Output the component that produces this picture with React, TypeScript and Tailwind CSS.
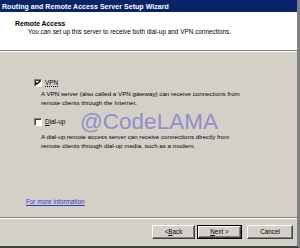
import React from "react";

function Check({ checked }: { checked?: boolean }) {
  return (
    <div className="w-[8px] h-[8px] bg-white border-t border-l border-t-[#808080] border-l-[#808080] border-b border-r border-b-white border-r-white shadow-[inset_1px_1px_0_#404040] flex items-center justify-center shrink-0">
      {checked && (
        <svg width="6" height="6" viewBox="0 0 6 6">
          <path d="M0.5 2.5 L2 4 L5.5 0.8" stroke="#000" strokeWidth="1.3" fill="none" />
        </svg>
      )}
    </div>
  );
}

function Btn({ children, def }: { children: React.ReactNode; def?: boolean }) {
  return (
    <div className={"h-[14px] flex " + (def ? "border border-black" : "")}>
      <div
        className={
          "flex-1 flex items-center justify-center bg-[#d4d0c8] border-t border-l border-t-white border-l-white border-b border-r border-b-[#404040] border-r-[#404040] shadow-[inset_-1px_-1px_0_#808080] text-[6.3px] text-black"
        }
      >
        {children}
      </div>
    </div>
  );
}

export default function App() {
  return (
    <div
      className="w-[300px] h-[248px] flex flex-col bg-[#d4d0c8] border-r-[3px] border-r-[#808080] border-b-2 border-b-[#404040] relative overflow-hidden"
      style={{ fontFamily: '"Liberation Sans", Arial, sans-serif' }}
    >
      {/* title bar */}
      <div className="h-[12px] bg-[#0a246a] flex items-center pl-[2px] shrink-0">
        <span className="text-white font-bold text-[7px] leading-none tracking-[0.05px]">
          Routing and Remote Access Server Setup Wizard
        </span>
      </div>
      {/* header */}
      <div className="h-[38px] bg-white flex flex-col pl-[15px] pt-[8px] shrink-0">
        <div className="font-bold text-[6.8px] leading-[8px] text-black">Remote Access</div>
        <div className="pl-[13px] text-[6.4px] leading-[8px] text-black">
          You can set up this server to receive both dial-up and VPN connections.
        </div>
      </div>
      <div className="h-px bg-[#808080] shrink-0" />
      <div className="h-px bg-white shrink-0" />
      {/* body */}
      <div className="flex-1 flex flex-col pl-[34px] pt-[27px]">
        <div className="flex items-center gap-[2px]">
          <Check checked />
          <span className="text-[6.4px] leading-[8px] text-black underline decoration-dotted px-[1px]">VPN</span>
        </div>
        <div className="pl-[7px] pt-[3px] text-[6.2px] leading-[8.5px] text-black">
          <div>A VPN server (also called a VPN gateway) can receive connections from</div>
          <div>remote clients through the Internet.</div>
        </div>
        <div className="flex items-center gap-[2px] mt-[11px]">
          <Check />
          <span className="text-[6.4px] leading-[8px] text-black px-[1px]">
            <span className="underline">D</span>ial-up
          </span>
        </div>
        <div className="pl-[7px] pt-[7px] text-[6.2px] leading-[8.5px] text-black">
          <div>A dial-up remote access server can receive connections directly from</div>
          <div>remote clients through dial-up media, such as a modem.</div>
        </div>
        <div className="flex-1" />
        <div className="-ml-[8px] mb-[11px] text-[6.3px] leading-[8px] text-[#3333cc] underline">
          For more information
        </div>
      </div>
      <div className="h-px bg-[#808080] shrink-0" />
      <div className="h-px bg-white shrink-0" />
      {/* buttons */}
      <div className="h-[27px] flex items-start pt-[6px] pr-[4px] shrink-0">
        <div className="flex-1" />
        <div className="w-[43px]">
          <Btn>
            &lt; <span className="underline">B</span>ack
          </Btn>
        </div>
        <div className="w-[45px] ml-[2px]">
          <Btn def>
            <span className="underline">N</span>ext &gt;
          </Btn>
        </div>
        <div className="w-[46px] ml-[5px]">
          <Btn>Cancel</Btn>
        </div>
      </div>
      {/* watermark */}
      <div
        className="absolute left-[80px] top-[111px] text-[22.5px] leading-[22px] text-[#8c88cc] opacity-90 pointer-events-none"
        style={{ fontFamily: '"Liberation Sans", Arial, sans-serif' }}
      >
        @CodeLAMA
      </div>
    </div>
  );
}
